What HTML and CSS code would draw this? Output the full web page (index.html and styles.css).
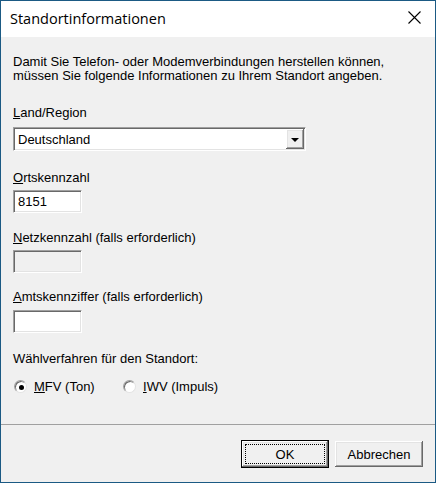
FILE: index.html
```html
<!DOCTYPE html>
<html lang="de">
<head>
<meta charset="utf-8">
<title>Standortinformationen</title>
<link rel="stylesheet" href="styles.css">
</head>
<body>
<div class="window">
  <div class="titlebar">
    <span class="title">Standortinformationen</span>
    <svg class="close" width="13" height="13" viewBox="0 0 13 13"><path d="M0.5 0.5 L12.5 12.5 M12.5 0.5 L0.5 12.5" stroke="#000" stroke-width="1.1" fill="none"/></svg>
  </div>
  <div class="content">
    <p class="intro">Damit Sie Telefon- oder Modemverbindungen herstellen können,<br>müssen Sie folgende Informationen zu Ihrem Standort angeben.</p>
    <div class="label l-land"><u>L</u>and/Region</div>
    <div class="combo">
      <span class="combo-text">Deutschland</span>
      <span class="combo-btn"><span class="arrow"></span></span>
    </div>
    <div class="label l-orts"><u>O</u>rtskennzahl</div>
    <div class="field">8151</div>
    <div class="label l-netz"><u>N</u>etzkennzahl (falls erforderlich)</div>
    <div class="field disabled"></div>
    <div class="label l-amts"><u>A</u>mtskennziffer (falls erforderlich)</div>
    <div class="field field-amts"></div>
    <div class="label l-wahl">Wählverfahren für den Standort:</div>
    <div class="radios">
      <div class="radio-item first"><span class="radio checked"></span><span><u>M</u>FV (Ton)</span></div>
      <div class="radio-item"><span class="radio"></span><span><u>I</u>WV (Impuls)</span></div>
    </div>
  </div>
  <div class="footer">
    <div class="btn default">OK</div>
    <div class="btn">Abbrechen</div>
  </div>
</div>
</body>
</html>
```
FILE: styles.css
```css
* { box-sizing: border-box; }
html, body { margin: 0; padding: 0; }
body {
  width: 436px;
  height: 483px;
  font-family: "Liberation Sans", Arial, sans-serif;
  font-size: 13px;
  color: #000;
}
.window {
  width: 436px;
  height: 483px;
  border: 1px solid #1b5a84;
  background: #f0f0f0;
  display: flex;
  flex-direction: column;
}
.titlebar {
  height: 36px;
  background: #fff;
  display: flex;
  align-items: center;
  justify-content: space-between;
  padding: 0 14px 0 9px;
  flex: none;
}
.title {
  font-family: "Open Sans", "Noto Sans", sans-serif;
  font-size: 14.5px;
  color: #000;
  margin-top: -1px;
}
.close { display: block; margin-top: -3px; }
.content {
  flex: 1;
  padding: 0 12px;
  line-height: 14px;
}
.intro { margin: 18px 0 0 0; line-height: 14px; }
.label { line-height: 14px; }
.l-land { margin-top: 23px; }
.l-orts { margin-top: 20px; }
.l-netz { margin-top: 18px; }
.l-amts { margin-top: 17px; }
.l-wahl { margin-top: 19px; }
.combo {
  margin-top: 7px;
  width: 293px;
  height: 24px;
  background: #fff;
  border-top: 1px solid #a0a0a0;
  border-left: 1px solid #a0a0a0;
  border-bottom: 1px solid #fff;
  border-right: 1px solid #fff;
  box-shadow: inset 1px 1px #696969, inset -1px -1px #e3e3e3;
  display: flex;
  align-items: center;
  padding: 1px 1px 1px 4px;
}
.combo-text { flex: 1; padding-top: 1px; }
.combo-btn {
  flex: none;
  width: 18px;
  height: 20px;
  background: #f0f0f0;
  box-shadow: inset -1px -1px #696969, inset 1px 1px #fff, inset -2px -2px #a0a0a0, inset 2px 2px #e3e3e3;
  display: flex;
  align-items: center;
  justify-content: center;
}
.arrow {
  width: 0; height: 0;
  border-left: 4px solid transparent;
  border-right: 4px solid transparent;
  border-top: 4px solid #000;
  margin-top: 1px;
}
.field {
  margin-top: 5px;
  width: 69px;
  height: 23px;
  background: #fff;
  border-top: 1px solid #a0a0a0;
  border-left: 1px solid #a0a0a0;
  border-bottom: 1px solid #fff;
  border-right: 1px solid #fff;
  box-shadow: inset 1px 1px #696969, inset -1px -1px #e3e3e3;
  padding: 4px 0 0 4px;
}
.field-amts { margin-top: 6px; }
.field.disabled { background: #f0f0f0; }
.radios {
  margin-top: 14px;
  display: flex;
  align-items: center;
  height: 13px;
}
.radio-item { display: flex; align-items: center; gap: 7px; }
.radio-item.first { width: 109px; }
.radio {
  width: 13px;
  height: 13px;
  border-radius: 50%;
  background: #fff;
  border: 1px solid;
  border-color: #a0a0a0 #e3e3e3 #e3e3e3 #a0a0a0;
  box-shadow: inset 1px 1px #696969;
  display: flex;
  align-items: center;
  justify-content: center;
  margin-left: 1px;
}
.radio.checked::before {
  content: "";
  width: 5px;
  height: 5px;
  border-radius: 50%;
  background: #000;
  margin: 1px 0 0 1px;
}
.footer {
  flex: none;
  height: 58px;
  border-top: 1px solid #a0a0a0;
  display: flex;
  justify-content: flex-end;
  align-items: flex-start;
  gap: 6px;
  padding: 15px 12px 0 0;
}
.btn {
  width: 88px;
  height: 26px;
  margin-top: 1px;
  background: #f0f0f0;
  box-shadow: inset -1px -1px #696969, inset 1px 1px #fff, inset -2px -2px #a0a0a0, inset 2px 2px #e3e3e3;
  display: flex;
  align-items: center;
  justify-content: center;
  position: relative;
}
.btn.default {
  height: 28px;
  margin-top: 0;
  border: 1px solid #000;
}
.btn.default::after {
  content: "";
  position: absolute;
  left: 3px; top: 3px; right: 3px; bottom: 3px;
  border: 1px dotted #000;
}
```
